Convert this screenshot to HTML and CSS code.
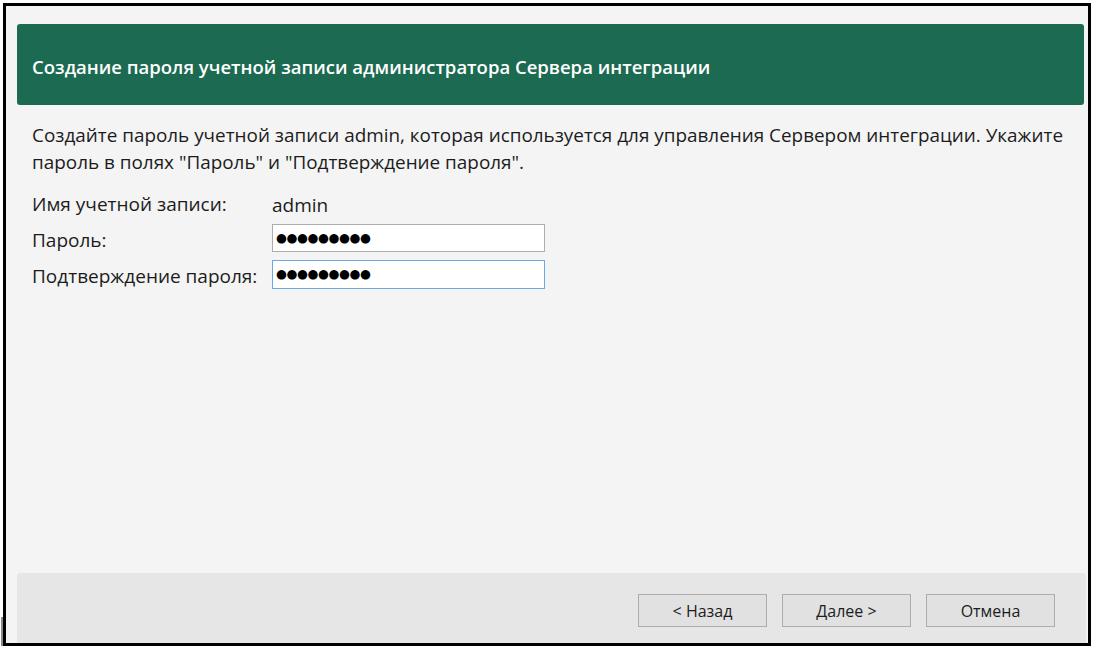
FILE: index.html
```html
<!DOCTYPE html>
<html lang="ru">
<head>
  <meta charset="UTF-8">
  <title>Создание пароля</title>
  <link rel="stylesheet" href="styles.css">
</head>
<body>

<div class="window">
  <div class="header">
    <h1 class="title">Создание пароля учетной записи администратора Сервера интеграции</h1>
  </div>

  <div class="content">
    <p class="intro">Создайте пароль учетной записи admin, которая используется для управления Сервером интеграции. Укажите пароль в полях "Пароль" и "Подтверждение пароля".</p>

    <div class="form">
      <span class="label">Имя учетной записи:</span>
      <span class="value">admin</span>

      <span class="label">Пароль:</span>
      <div class="field">●●●●●●●●●</div>

      <span class="label">Подтверждение пароля:</span>
      <div class="field field-focus">●●●●●●●●●</div>
    </div>
  </div>

  <div class="footer">
    <button class="btn">&lt; Назад</button>
    <button class="btn">Далее &gt;</button>
    <button class="btn">Отмена</button>
  </div>
</div>

</body>
</html>
```

FILE: styles.css
```css
body {
  margin: 0;
  background: #ffffff;
  font-family: 'Open Sans', 'Noto Sans', sans-serif;
  color: #1c1c1c;
}
.window {
  position: relative;
  margin: 3px 0 0 3px;
  width: 1088px;
  height: 643px;
  border: 3px solid #000;
  background: #f4f4f4;
  padding: 18px 4px 0 11px;
  box-sizing: border-box;
  display: flex;
  flex-direction: column;
}
/* серая полоска слева снизу, как на скриншоте */
.window::before {
  content: "";
  position: absolute;
  left: -5px;
  bottom: -3px;
  width: 2px;
  height: 29px;
  background: #8a8a8a;
}
.header {
  background: #1b6a51;
  border-radius: 3px;
  height: 81px;
  flex-shrink: 0;
  display: flex;
  align-items: center;
  padding: 3px 15px 0 15px;
  box-sizing: border-box;
}
.title {
  margin: 0;
  color: #fff;
  font-size: 18.5px;
  font-weight: 600;
}
.content {
  flex: 1;
  padding: 17px 15px 0 15px;
}
.intro {
  margin: 0;
  font-size: 18.9px;
  line-height: 27px;
}
.form {
  margin-top: 12px;
  display: grid;
  grid-template-columns: 240px 273px;
  grid-auto-rows: 28px;
  row-gap: 8px;
  align-items: center;
  font-size: 19px;
}
.value {
  padding-top: 6px;
}
.label {
  padding-top: 3px;
}
.field {
  height: 28px;
  box-sizing: border-box;
  border: 1px solid #adadad;
  background: #fff;
  padding: 0 3px;
  font-family: 'DejaVu Sans', sans-serif;
  font-size: 12.5px;
  line-height: 26px;
  letter-spacing: -0.4px;
  color: #000;
}
.field-focus {
  border-color: #6aa9e6;
  height: 29px;
}
.footer {
  background: #e6e6e6;
  border-radius: 3px 3px 0 0;
  height: 70px;
  flex-shrink: 0;
  margin-right: -2px;
  display: flex;
  justify-content: flex-end;
  gap: 15px;
  padding: 21px 31px 0 0;
  box-sizing: border-box;
}
.btn {
  width: 129px;
  height: 33px;
  background: #e1e1e1;
  border: 1px solid #adadad;
  font-family: 'Open Sans', 'Noto Sans', sans-serif;
  font-size: 16px;
  color: #1c1c1c;
  padding: 0;
}
```
